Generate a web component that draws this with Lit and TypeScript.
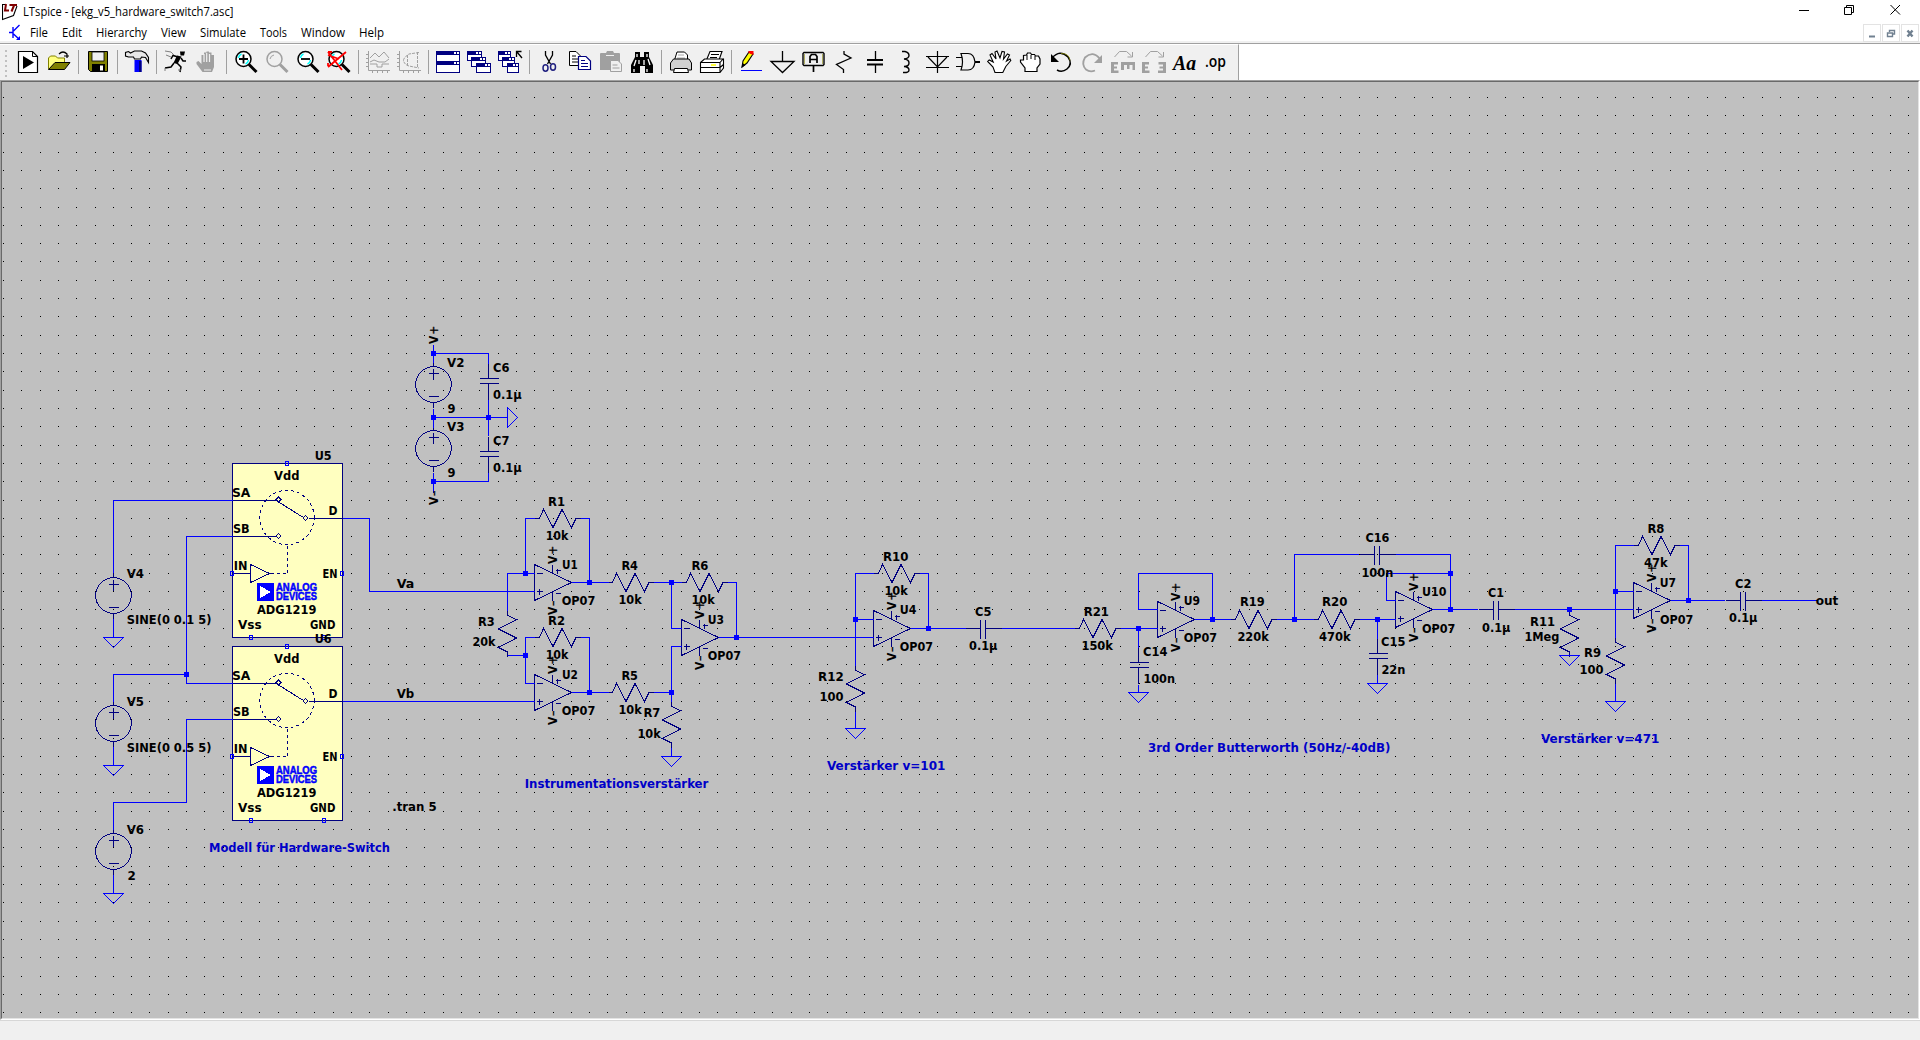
import { LitElement, html, svg, css } from "lit";
import { customElement } from "lit/decorators.js";

type Label = [string, number, number, number];
type Pt = [number, number];

/* ---------- schematic data ---------- */

const LABELS: Label[] = [
  ["V4", 127, 143.3, 578], ["SINE(0 0.1 5)", 127, 210.7, 624],
  ["V5", 127, 143.3, 706], ["SINE(0 0.5 5)", 127, 210.7, 752],
  ["V6", 127, 143.3, 834], ["2", 127.7, 135, 880],
  ["Va", 397, 413.5, 588], ["Vb", 397, 413.5, 698], [".tran 5", 392.5, 436, 811],
  ["V2", 447.3, 463.7, 367], ["9", 447.7, 454.7, 413], ["V3", 447.3, 463.7, 431], ["9", 447.7, 454.7, 477],
  ["C6", 493.3, 508.7, 372], ["0.1µ", 493.3, 521, 399], ["C7", 493.3, 508.7, 445], ["0.1µ", 493.3, 521, 472],
  ["R1", 548.3, 564.3, 506], ["10k", 546, 567.7, 540], ["U1", 562.3, 577, 569], ["OP07", 562, 594.7, 605],
  ["R2", 548.3, 564.3, 625], ["10k", 546, 567.7, 659], ["U2", 562.3, 577.3, 679], ["OP07", 562, 594.7, 715],
  ["R3", 478.3, 494, 626], ["20k", 472.7, 494.7, 646],
  ["R4", 621.7, 637.3, 570], ["10k", 618.7, 641, 604], ["R5", 621.7, 637.3, 680], ["10k", 618.7, 641, 714],
  ["R6", 691.7, 707.7, 570], ["10k", 691.7, 714, 604], ["U3", 708, 723.3, 624], ["OP07", 708, 740.3, 660],
  ["R7", 643.7, 659.7, 717], ["10k", 637.7, 660, 738],
  ["R10", 883.3, 907.7, 561], ["10k", 884.7, 907, 595], ["U4", 900, 915.7, 614], ["OP07", 900, 932.3, 651],
  ["C5", 975.3, 990.7, 616], ["0.1µ", 969.3, 996.7, 650], ["R12", 818.3, 843, 681], ["100", 819.7, 842.7, 701],
  ["R21", 1084, 1108.3, 616], ["150k", 1081.7, 1112.3, 650], ["C14", 1143.3, 1166.7, 656], ["100n", 1143.7, 1174.3, 683],
  ["U9", 1184, 1199.3, 605], ["OP07", 1184, 1216.3, 642], ["R19", 1240.3, 1264, 606], ["220k", 1237.7, 1268, 641],
  ["C16", 1365.7, 1388.7, 542], ["100n", 1361.7, 1392.7, 577], ["R20", 1322.3, 1346.7, 606], ["470k", 1319.3, 1350, 641],
  ["C15", 1381.3, 1404.7, 646], ["22n", 1381.7, 1404.7, 674], ["U10", 1422.3, 1445.7, 596], ["OP07", 1422.3, 1454.7, 633],
  ["C1", 1488.3, 1503.3, 597], ["0.1µ", 1482.3, 1509.7, 632], ["R11", 1530.3, 1554.3, 626], ["1Meg", 1524.7, 1558.7, 641],
  ["R9", 1584.3, 1600.3, 657], ["100", 1579.7, 1602.7, 674], ["R8", 1647.7, 1663.7, 533], ["47k", 1644.3, 1667, 567],
  ["U7", 1660, 1675.3, 587], ["OP07", 1660.3, 1692.7, 624], ["C2", 1735.3, 1750.7, 588], ["0.1µ", 1729.3, 1756.7, 622],
  ["out", 1816, 1837.7, 605],
];

const NOTES: Label[] = [
  ["Modell für Hardware-Switch", 209.3, 389.3, 852],
  ["Instrumentationsverstärker", 525, 707.7, 788],
  ["Verstärker v=101", 827.3, 944.7, 770],
  ["3rd Order Butterworth (50Hz/-40dB)", 1148.3, 1389.7, 752],
  ["Verstärker v=471", 1541.3, 1658.7, 743],
];

const WIRES = [
  "M113 572V500H232", "M232 536H186V683H232", "M186 674H113V701", "M113 829V802H186V719H232",
  "M342 518H369V591H534", "M342 701H534",
  "M113 618V637", "M113 746V765", "M113 874V893",
  "M433 344V362M433 353H488V363M433 408V427M433 417H507M488 399V435M433 472V492M433 481H488V472",
  "M534 518H525V573M580 518H589V582M534 573H507V610M571 582H608",
  "M534 637H525V683H534M507 655H525M580 637H589V692M571 692H608",
  "M653 582H681M671 582V628H681M727 582H736V637M718 637H873M681 646H671V701M653 692H671M671 747V756",
  "M873 573H855V665M855 619H873M919 573H928V628M910 628H965M1001 628H1074M855 711V728",
  "M1120 628H1157M1138 628V647M1138 684V692M1157 609H1138V573H1212V619M1194 619H1230M1276 619H1313",
  "M1294 619V554H1358M1395 554H1450V609M1450 573H1386V600H1395M1359 619H1395M1377 619V638M1377 674V683",
  "M1432 609H1477M1514 609H1633M1569 609V610",
  "M1633 545H1615V637M1615 591H1633M1679 545H1688V600M1670 600H1724M1761 600H1816M1615 683V701",
].join("");

const JOINTS: Pt[] = [
  [186, 674], [433, 353], [433, 417], [488, 417], [433, 481], [525, 573], [589, 582], [525, 655], [589, 692],
  [671, 582], [736, 637], [671, 692], [855, 619], [928, 628], [1138, 628], [1212, 619], [1294, 619],
  [1377, 619], [1450, 573], [1450, 609], [1569, 609], [1615, 591], [1688, 600],
];
const GROUNDS: Pt[] = [[113, 637], [113, 765], [113, 893], [671, 756], [855, 728], [1138, 692], [1377, 683], [1569, 655], [1615, 701]];
const RES_H: Pt[] = [[534, 518], [534, 637], [607, 582], [607, 692], [681, 582], [873, 573], [1074, 628], [1230, 619], [1313, 619], [1633, 545]];
const RES_V: Pt[] = [[507, 610], [671, 701], [855, 665], [1569, 610], [1615, 637]];
const CAP_H: Pt[] = [[980, 628], [1374, 554], [1493, 609], [1740, 600]];
const CAP_V: Pt[] = [[488, 378], [488, 451], [1138, 662], [1377, 653]];
const SOURCES: Pt[] = [[113, 595], [113, 723], [113, 851], [433, 384], [433, 448]];
const OPAMPS: Pt[] = [[534, 582], [534, 692], [681, 637], [873, 628], [1157, 619], [1395, 609], [1633, 600]];

const grid = (() => {
  let d = "";
  for (let j = 0; j < 51; j++) {
    const y = Math.floor(97.2 + j * 18.31);
    for (let i = 0; i < 105; i++) d += `M${Math.floor(3.41 + i * 18.32)} ${y}h1v1h-1z`;
  }
  return d;
})();

const resH = ([x, y]: Pt) =>
  `M${x} ${y}h5l4 -9l9.5 18l9 -18l9.5 18l4.5 -9h5`;
const resV = ([x, y]: Pt) =>
  `M${x} ${y}v5l9 4l-18 9.5l18 9l-18 9.5l9 4.5v5`;
const capH = ([x, y]: Pt) => `M${x - 15} ${y}h15M${x} ${y - 9}v19M${x + 5} ${y - 9}v19M${x + 5} ${y}h16`;
const capV = ([x, y]: Pt) => `M${x} ${y - 15}v15M${x - 9} ${y}h19M${x - 9} ${y + 5}h19M${x} ${y + 5}v16`;
const opamp = ([x, y]: Pt) =>
  `M${x} ${y - 18}V${y + 18}L${x + 37} ${y}zM${x + 2} ${y - 9}h6M${x + 2} ${y + 9}h6M${x + 5} ${y + 6}v6` +
  `M${x + 18} ${y - 18}v9M${x + 18} ${y + 9}v9M${x + 21} ${y - 12}h5M${x + 23} ${y - 14}v5M${x + 21} ${y + 11}h5`;
const source = ([x, y]: Pt) =>
  `M${x} ${y - 23}v5M${x} ${y + 18}v5M${x - 5} ${y - 11}h10M${x} ${y - 16}v11M${x - 5} ${y + 12}h10`;

const label = ([t, a, b, y]: Label, cls = "lbl") =>
  svg`<text class=${cls} x=${a - 0.3} y=${y} textLength=${b - a + 1} lengthAdjust="spacingAndGlyphs">${t}</text>`;

const supply = (x: number, bottom: number, sign: string) => {
  const plus = sign === "+";
  return svg`<text class="lbl" transform=${`translate(${x + 5} ${bottom}) rotate(-90)`}><tspan
    textLength="8.4" lengthAdjust="spacingAndGlyphs">V</tspan><tspan class="sign" x=${plus ? 9.3 : 9}
    textLength=${plus ? 9 : 5.5} lengthAdjust="spacingAndGlyphs">${sign}</tspan></text>`;
};

const chip = (dy: number, name: string) => svg`
  <g transform=${`translate(0 ${dy})`}>
    <g transform="translate(.5 .5)">
      <rect class="chip" x="232" y="463" width="110" height="174"/>
      <path class="sym" d="M232 500H275M232 536H275M308 518H342M279 502L302 516.5M232 573H250M250 564V582L269 573z"/>
      <path class="sym" d="M278 496.500l2.500 2.500l-2.500 2.500l-2.500 -2.500zM278 533l2.500 2.500l-2.500 2.500l-2.500 -2.500zM305 515l2.500 2.500l-2.500 2.500l-2.500 -2.500z"/>
      <circle class="sym dash" cx="286.5" cy="517" r="27.2"/>
      <path class="sym dash" d="M287 545V573H269"/>
      ${[[232, 573], [342, 573], [287, 463], [251, 637], [324, 637]].map(
        ([x, y]) => svg`<path class="wire" d=${`M${x - 2} ${y - 2}h3v4h-3z`}/>`)}
    </g>
    <path class="blue" d="M257 583h17v18h-17z"/><path d="M260 586v12l11-6z" fill="#fff"/>
    <text class="ad" x="276" y="591" textLength="41" lengthAdjust="spacingAndGlyphs">ANALOG</text>
    <text class="ad" x="276" y="600.4" textLength="41" lengthAdjust="spacingAndGlyphs">DEVICES</text>
    ${([["Vdd", 274.3, 298.7, 480], ["SA", 232.3, 249.7, 497], ["D", 328.7, 336.7, 515], ["SB", 233.3, 249, 533],
      ["IN", 234, 246.7, 570], ["EN", 322.7, 336.7, 578], ["ADG1219", 257.3, 315.7, 614], ["Vss", 238.3, 261, 629],
      ["GND", 310.3, 334.7, 629], [name, 315, 331, 460]] as Label[]).map((l) => label(l))}
  </g>`;

/* ---------- toolbar icons, 24 x 24 ---------- */

const windowGlyph = (x: number, y: number, w: number, h: number) => svg`
  <rect x=${x + 0.5} y=${y + 0.5} width=${w - 1} height=${h - 1} fill="#fff" stroke="#000080"/>
  <rect x=${x} y=${y} width=${w} height="4" fill="#000080"/>
  <path d=${`M${x + w - 3} ${y + 1}h2v2h-2zM${x + w - 6} ${y + 1}h2v2h-2z`} fill="#fff"/>`;

const lens = (c: string, inner: unknown) => svg`
  <circle cx="9.5" cy="9" r="7.5" fill=${c === "#000" ? "#fff" : "none"} stroke=${c} stroke-width="1.5"/>
  ${c === "#000" ? svg`<path d="M4.5 8a5 5 0 0 1 3-4M14.5 10a5 5 0 0 1-3 4" fill="none" stroke="#0ff" stroke-width="1.5"/>` : ""}
  <path d="M15 14.5L22.5 22" stroke=${c} stroke-width="3"/>${inner}`;

const eGlyph = svg`<path d="M0 12h7v2.500H3v2h3v2H3v2h4.500V23H0z" fill="#a0a0a0"/><path d="M3.500 7l5-5.500h7l5 4.500M21.500 2v5h-5" fill="none" stroke="#a0a0a0"/>`;

const ICONS: Record<string, unknown> = {
  doc: svg`<path d="M2.5 1.5H16.5L21.5 6.5V22.5H2.5z" fill="#fff" stroke="#000" stroke-width="1.2"/><path d="M16.5 1.5V6.5H21.5" fill="none" stroke="#000"/><path d="M7 6v13l11-6.5z"/>`,
  open: svg`<path d="M1.5 19V8l2-2h5l2 2h7v5" fill="#ffff80" stroke="#808000"/><path d="M1.5 19.5L8 12.5H23L17.5 19.5z" fill="#808000" stroke="#000"/><path d="M12 4q4-4 8 0v3M17 6h5M20 8v-4" fill="none" stroke="#000" stroke-width="1.2"/>`,
  save: svg`<path d="M2.5 1.5H21.5V21.5H4.5L2.5 19.5z" fill="#808000" stroke="#000"/><rect x="6" y="2" width="12" height="9" fill="#efefef" stroke="#000" stroke-width=".8"/><rect x="6" y="14" width="13" height="8"/><rect x="14" y="15.500" width="3" height="5" fill="#fff"/>`,
  hammer: svg`<path d="M9.500 10h7v12h-7z" fill="#00f"/><path d="M14 11h2.500v11H14z" fill="#000080"/><path d="M.5 6V2.500l3-1 2 1.500 4-2h7l4 2 3 4.500v5l-3-5-4-.5-1 2h-6l-1-2H6L3.500 7z" fill="#e8e8e8" stroke="#000" stroke-width="1.100"/>`,
  run: svg`<path d="M14 7L9 5.500 7 9M17 8l2 3h3M13 13l4 4-1 5M10 13l-3 4-6 1" fill="none" stroke="#000" stroke-width="1.500"/><path d="M16 1.500h5l-1 4h-3.500zM13 5.500l4.500 1-4 7.500-4-1z"/><path d="M1 1l6 1 3 3M2 5l5 2M14 20h3M1 18v3" fill="none" stroke="#808080"/>`,
  halt: svg`<path d="M7.500 22L1.500 14v-2l2-1 3 3V5h2.500V2.500h2.500V1.500h2.500v1h2.500V5h2.500v12l-2 5z" fill="#a0a0a0"/><path d="M9 4v8M11.700 3v9M14.500 4v8M9 20h7" stroke="#f0f0f0" stroke-width="1.200"/>`,
  zin: lens("#000", svg`<path d="M5 9h9M9.500 4.500v9" stroke="#000" stroke-width="1.800"/>`),
  zfit: lens("#a0a0a0", svg`<path d="M5 9a5 5 0 0 1 4-4" fill="none" stroke="#a0a0a0"/>`),
  zout: lens("#000", svg`<path d="M5 9h9" stroke="#000" stroke-width="1.800"/>`),
  zall: lens("#000", svg`<path d="M1 2L15 20M19 2L1 17M1 2h4M1 16v-3M1 5L12 9" stroke="#f00" stroke-width="1.800" fill="none"/>`),
  plot1: svg`<path d="M2.500 1V20.500H24M0 4.500h2M0 8.500h2M0 12.500h2M0 16.500h2M6.500 20v3M11.500 20v3M16.500 20v3M21.500 20v3M4 8l5-5 4 4 5-5 5 6M4 12l4-2 5 2h6l4-3M4 14h7v3h5v-3h7" fill="none" stroke="#a0a0a0"/>`,
  plot2: svg`<path d="M2.500 1V20.500H24M0 4.500h2M0 8.500h2M0 12.500h2M0 16.500h2M6.500 20v3M11.500 20v3M16.500 20v3M21.500 20v3" fill="none" stroke="#a0a0a0"/><path d="M22 2.500L12 4Q6 8 6.500 11 8 15 12 16L22 18M20.500 2v15M10.500 5v11" fill="none" stroke="#a0a0a0" stroke-dasharray="3 1"/>`,
  tile: svg`${windowGlyph(0, 1, 24, 11)}${windowGlyph(0, 11, 24, 12)}`,
  casc: svg`${windowGlyph(0, 1, 15, 10)}${windowGlyph(4, 7, 15, 10)}${windowGlyph(9, 13, 15, 10)}`,
  close: svg`${windowGlyph(0, 1, 13, 10)}${windowGlyph(4, 7, 13, 10)}${windowGlyph(9, 13, 12, 10)}<path d="M18.500 7V1.500h5M19 2l5 6" fill="none" stroke="#000" stroke-width="1.300"/>`,
  cut: svg`<path d="M8.500 1v4l5 9M15.500 1v4l-5 9" fill="none" stroke="#000" stroke-width="1.300"/><ellipse cx="8.500" cy="18" rx="2.500" ry="3.200" fill="none" stroke="#202080" stroke-width="1.500"/><ellipse cx="16" cy="17" rx="2.500" ry="3.200" fill="none" stroke="#202080" stroke-width="1.500"/>`,
  copy: svg`<path d="M1.500 1.500H8L12.500 6V15.500H1.500z" fill="#fff" stroke="#000"/><path d="M4 6h4M4 9h6M4 12h6" stroke="#000"/><path d="M10.500 6.500H18L22.500 11V19.500H10.500z" fill="#fff" stroke="#000080" stroke-width="1.200"/><path d="M13 10.500h4M13 13.500h7M13 16.500h7" stroke="#000080"/>`,
  paste: svg`<path d="M1 4q0-1 1-1h5l1-2h6l1 2h5q1 0 1 1v16H1z" fill="#a0a0a0"/><path d="M7 5.500h8" stroke="#f0f0f0"/><path d="M11.500 10.500H19L22.500 14V21.500H11.500z" fill="#f0f0f0" stroke="#a0a0a0"/><path d="M13.500 15h5M13.500 18h7" stroke="#a0a0a0"/>`,
  find: svg`<path d="M5 2h5v5h4V2h5v5l4 8v8h-8v-7h-5v7H1v-8l4-8z"/><path d="M7 4v3M17 4v3M6 10l-2 6M14 10v5M18 9l2 6M9 10v4M4 19v3M17 19v3" stroke="#fff" stroke-width="1.300"/>`,
  print: svg`<path d="M5.500 10L8 2H15.500l3 3v5" fill="#fff" stroke="#000"/><path d="M9 5h6M8 8h8" stroke="#aaa"/><path d="M1.500 13l3-4H20l2.500 4v7H1.500z" fill="#d0d0d0" stroke="#000"/><path d="M5.500 18.500h13l1 4h-15z" fill="#fff" stroke="#000"/>`,
  print2: svg`<path d="M6.500 10L10 1.500H22L19 10" fill="#fff" stroke="#000" stroke-width="1.100"/><path d="M11 4.500h8M10 7.500h7" stroke="#000"/><path d="M.5 12.500l4-3.500H20l3.500 0v9L20 22.500H.5zM.5 12.500H20V22M20 12.500l3.500-4M.5 17.500H20M20 17.500l3.500-3" fill="#fff" stroke="#000" stroke-width="1.100"/><path d="M11 15h5" stroke="#ff0" stroke-width="1.500"/>`,
  pencil: svg`<path d="M3 17l1-6 6-9 4 2-6 9z" fill="#ff0" stroke="#000" stroke-width="1.100"/><path d="M9.500 1h5v4l-5-2z" fill="#f00"/><path d="M2.500 18l1-5 3 2z"/><path d="M2 20.500H23" stroke="#00f"/>`,
  gnd: svg`<path d="M12.500 1V12M1 11.500H24L12.500 22.500z" fill="none" stroke="#000" stroke-width="1.300"/>`,
  net: svg`<path d="M3 2.500h19l1 1v11l-1 1H3l-1-1v-11z" fill="none" stroke="#000" stroke-width="1.400"/><path d="M3.500 4v10M21.500 4v10" stroke="#808000" stroke-width=".6"/><path d="M9 13V6.500l1.500-2h4l1.500 2V13M9 9.500h7M12.500 16v6" fill="none" stroke="#000" stroke-width="1.700"/>`,
  res: svg`<path d="M12 1v3l7 4L4.500 14.500l7 5v3.500" fill="none" stroke="#000" stroke-width="1.300"/>`,
  cap: svg`<path d="M12.500 1v8.500M12.500 15v8" stroke="#000" stroke-width="1.300"/><path d="M4 10h16M4 14.500h16" stroke="#000" stroke-width="2"/>`,
  ind: svg`<path d="M8 1.500h3q4 1 4 4t-5 3.500q5 .5 5 4t-5 3.500q5 .5 5 3.500t-6 2.500" fill="none" stroke="#000" stroke-width="1.400"/>`,
  diode: svg`<path d="M12.500 1V23M1 6.500H24M1 17.500H24M3 7L12.500 17 22 7" fill="none" stroke="#000" stroke-width="1.200"/>`,
  gate: svg`<path d="M5 3.500h7q6 0 7 8.500-1 8-7 8H5q3-8 0-16.500zM0 7.500h6M0 16.500h6" fill="#f0f0f0" stroke="#000" stroke-width="1.200"/><path d="M19 12h5" stroke="#000" stroke-width="2"/>`,
  move: svg`<path d="M8 22.500L6 17 .7 11.500l1.500-1.500 4 2L3 5l2-1.500L9 9 8 2l2-1 3 7 2-6.500 2.500.5L16.500 9l4-5 2 1-3 6 3.500-2 .8 1.500-5 6-3 6z" fill="#fff" stroke="#000" stroke-width="1.100"/>`,
  drag: svg`<path d="M7 21.500V18L2.500 12v-2l3 0V5.500l3-.5 1-2h3l1 1.500h3l1 1.500h3l1.500 3v5l-3 4v3.500z" fill="#fff" stroke="#000" stroke-width="1.200"/><path d="M9 5v5M13 5v4M17 6v4" stroke="#000"/>`,
  undo: svg`<path d="M3 8Q11-1 19 7q5 7-1 12-5 4-10 1" fill="none" stroke="#000" stroke-width="1.500"/><path d="M12 3.500q8-.5 9 7" fill="none" stroke="#808000" stroke-width=".8"/><path d="M2 4v8h8z"/>`,
  redo: svg`<path d="M20 9Q13 0 5 7.500q-4 7 1 12 4 3 9 1" fill="none" stroke="#a0a0a0" stroke-width="1.800"/><path d="M22 5v8h-8z" fill="#a0a0a0"/>`,
  rot: svg`${eGlyph}<path d="M10 12h14v8h-2.500v-5H18.500v4H16v-4h-3v5H10z" fill="#a0a0a0"/>`,
  mir: svg`${eGlyph}<path d="M24 12h-7.500v2.500H21v2h-3.500v2H21v2h-5V23h8z" fill="#a0a0a0"/>`,
  text: svg`<text x="0" y="20" class="aa" textLength="23" lengthAdjust="spacingAndGlyphs">Aa</text>`,
  op: svg`<text x="1" y="17" class="op" textLength="21" lengthAdjust="spacingAndGlyphs">.op</text>`,
};

const TOOLS = ("doc open | save | hammer | run halt | zin zfit zout zall | plot1 plot2 | tile casc close | cut copy paste find | " +
  "print print2 | pencil gnd net res cap ind diode gate move drag undo redo rot mir text op").split(" ");

const MENUS: [string, number, number][] = [
  ["File", 18, 14], ["Edit", 20, 14], ["Hierarchy", 51, 14], ["View", 25, 14],
  ["Simulate", 46, 14], ["Tools", 27, 14], ["Window", 44, 14], ["Help", 25, 0],
];

const fit = (t: string, w: number) => html`<svg class="fit" width=${w + 2} height="18">
  <text x="0" y="13" textLength=${w} lengthAdjust="spacingAndGlyphs">${t}</text></svg>`;

@customElement("app-root")
export class AppRoot extends LitElement {
  static styles = css`
    :host { display: block; height: 1040px; overflow: hidden; background: #fff; font-family: "Open Sans", "Noto Sans", sans-serif; }
    .app { display: flex; flex-direction: column; width: 1920px; height: 1040px; overflow: hidden; }
    .title { display: flex; height: 24px; align-items: center; }
    .menu { display: flex; height: 17px; align-items: center; border-bottom: 2px solid #f0f0f0; }
    .logo { margin: 0 4px 0 2px; }
    .bjt { margin: 0 9px 0 8px; }
    .fit { display: block; overflow: visible; }
    .fit text { font: 12px "Open Sans", "Noto Sans", sans-serif; fill: #000; }
    .item svg { margin-right: -2px; }
    .sp { flex: 1; }
    .ctl { display: flex; gap: 35px; margin-right: 19px; height: 12px; margin-top: -5px; }
    .mdi { display: flex; gap: 1px; margin-right: 1px; align-self: flex-start; }
    .mdi svg { border: 1px solid #e3e3e3; }
    .bar { display: flex; box-sizing: border-box; height: 37px; border-top: 1px solid #a0a0a0; }
    .tools { box-sizing: border-box; display: flex; align-items: flex-start; width: 1239px; height: 36px; background: #f0f0f0; border-right: 1px solid #a0a0a0; border-top: 1px solid #fff; padding: 5px 0 0 4px; }
    .grip { width: 8.5px; height: 28px; }
    .btn { display: flex; width: 31px; justify-content: center; }
    .sep { width: 1px; height: 24px; background: #a0a0a0; margin: 0 3.5px; }
    .frame { box-sizing: border-box; height: 940px; border: 1px solid; border-color: #a0a0a0 #fff #fff #a0a0a0; }
    .inner { box-sizing: border-box; height: 938px; border: 1px solid; border-color: #696969 #e3e3e3 #e3e3e3 #696969; background: #c0c0c0; }
    .sheet { display: block; }
    .status { flex: 1; background: #f0f0f0; border-top: 1px solid #d7d7d7; }
    .wire { fill: none; stroke: #0000ff; }
    .blue { fill: #0000ff; }
    .sym { fill: none; stroke: #000080; }
    .dash { stroke-dasharray: 3 3; }
    .chip { fill: #ffffc0; stroke: #000080; }
    .lbl, .note { font: bold 12.6px "DejaVu Sans", sans-serif; font-stretch: condensed; fill: #000; }
    .note { fill: #0000c8; }
    .sign { font-weight: normal; stroke: #000; stroke-width: .3; }
    .ad { font: bold 10.500px "Liberation Sans", sans-serif; fill: #0000ff; stroke: #0000ff; stroke-width: .5; }
    .aa { font: italic bold 20px "Liberation Serif", serif; }
    .op { font: 600 16px "Open Sans", sans-serif; }
    .sheet path, .sheet rect, .sheet circle { shape-rendering: crispEdges; }
  `;

  render() {
    return html`<div class="app">
      <div class="title">
        <svg class="logo" width="17" height="18" viewBox="0 0 17 18">
          <path d="M3 1.500H.5V16.500L11.500 12.500 15 3" fill="none" stroke="#000" stroke-width="1.100"/>
          <path d="M4 1L3 7.500h4M7.500 2H15M12 2.500L9.500 8.500" fill="none" stroke="#800000" stroke-width="2"/>
        </svg>
        ${fit("LTspice - [ekg_v5_hardware_switch7.asc]", 210.5)}
        <span class="sp"></span>
        <div class="ctl">
          <svg width="11" height="12"><path d="M1 6.500h10" stroke="#000"/></svg>
          <svg width="11" height="12"><path d="M.5 3.500h7v7h-7zM2.500 3V1.500h7v7H8" fill="none" stroke="#000"/></svg>
          <svg width="11" height="12"><path d="M.5 1l9.500 9.500M10 1L.5 10.500" stroke="#000"/></svg>
        </div>
      </div>
      <div class="menu">
        <svg class="bjt" width="13" height="17" viewBox="0 0 13 17"><path d="M1 8.500h4M5 3v11M5.500 7L11.500 1M5.500 10l6 5.500" fill="none" stroke="#00f" stroke-width="1.400"/><path d="M12 12v4H8z" fill="#00f"/></svg>
        ${MENUS.map(([t, w, g]) => html`<span class="item" style=${`margin-right:${g}px`}>${fit(t, w)}</span>`)}
        <span class="sp"></span>
        <div class="mdi">
          <svg width="16" height="16"><path d="M5 11.500h6" stroke="#708090" stroke-width="2"/></svg>
          <svg width="16" height="16"><path d="M4.500 8h5v3.500h-5zM6.500 7V5.500h5v3.500H10" fill="none" stroke="#708090" stroke-width="1.400"/></svg>
          <svg width="16" height="16"><path d="M5.500 5.500l5 6M10.500 5.500l-5 6" stroke="#708090" stroke-width="2.400"/></svg>
        </div>
      </div>
      <div class="bar">
        <div class="tools">
          <svg class="grip">${[0, 5, 10, 15, 20, 25].map((y) => svg`<path d=${`M1 ${y}h2v2h-2z`} fill="#c0c0c0"/>`)}</svg>
          ${TOOLS.map((t) => t === "|" ? html`<span class="sep"></span>`
            : html`<span class="btn"><svg width="24" height="24" viewBox="0 0 24 24" overflow="visible">${ICONS[t]}</svg></span>`)}
        </div>
      </div>
      <div class="frame"><div class="inner">
        <svg class="sheet" width="1916" height="936" viewBox="2 82 1916 936">
          <path d=${grid}/>
          ${chip(0, "U5")}${chip(183, "U6")}
          <g transform="translate(.5 .5)">
            <path class="sym" d=${[...RES_H.map(resH), ...RES_V.map(resV), ...CAP_H.map(capH), ...CAP_V.map(capV), ...OPAMPS.map(opamp), ...SOURCES.map(source)].join("")}/>
            ${SOURCES.map(([x, y]) => svg`<circle class="sym" cx=${x} cy=${y} r="17.800"/>`)}
            <path class="wire" d=${WIRES}/>
            <path class="wire" d=${GROUNDS.map(([x, y]) => `M${x - 10} ${y}h20l-10 10z`).join("") + "M507 407v20l10 -10z"}/>
          </g>
          <path class="blue" d=${JOINTS.map(([x, y]) => `M${x - 2} ${y - 2}h5v5h-5z`).join("")}/>
          ${OPAMPS.map(([x, y]) => [supply(x + 18, y - 18, "+"), supply(x + 18, y + 33, "-")])}
          ${supply(433, 344, "+")}${supply(433, 505, "-")}
          ${LABELS.map((l) => label(l))}
          ${NOTES.map((l) => label(l, "note"))}
        </svg>
      </div></div>
      <div class="status"></div>
    </div>`;
  }
}
